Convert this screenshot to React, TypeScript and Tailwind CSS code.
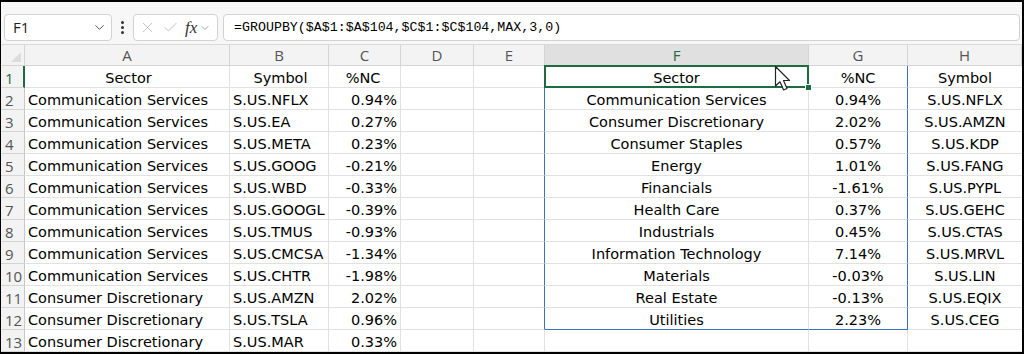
import { ChevronDown, X, Check } from 'lucide-react';

const cellFont = { fontFamily: '"DejaVu Sans", "Liberation Sans", sans-serif' };

const colWidths = 'grid-cols-[24px_205px_99px_72px_73px_71px_264px_99px_1fr]';
const letters = ['A', 'B', 'C', 'D', 'E', 'F', 'G', 'H'];

const source: [string, string, string][] = [
  ['Sector', 'Symbol', '%NC'],
  ['Communication Services', 'S.US.NFLX', '0.94%'],
  ['Communication Services', 'S.US.EA', '0.27%'],
  ['Communication Services', 'S.US.META', '0.23%'],
  ['Communication Services', 'S.US.GOOG', '-0.21%'],
  ['Communication Services', 'S.US.WBD', '-0.33%'],
  ['Communication Services', 'S.US.GOOGL', '-0.39%'],
  ['Communication Services', 'S.US.TMUS', '-0.93%'],
  ['Communication Services', 'S.US.CMCSA', '-1.34%'],
  ['Communication Services', 'S.US.CHTR', '-1.98%'],
  ['Consumer Discretionary', 'S.US.AMZN', '2.02%'],
  ['Consumer Discretionary', 'S.US.TSLA', '0.96%'],
  ['Consumer Discretionary', 'S.US.MAR', '0.33%'],
];

const grouped: [string, string, string][] = [
  ['Sector', '%NC', 'Symbol'],
  ['Communication Services', '0.94%', 'S.US.NFLX'],
  ['Consumer Discretionary', '2.02%', 'S.US.AMZN'],
  ['Consumer Staples', '0.57%', 'S.US.KDP'],
  ['Energy', '1.01%', 'S.US.FANG'],
  ['Financials', '-1.61%', 'S.US.PYPL'],
  ['Health Care', '0.37%', 'S.US.GEHC'],
  ['Industrials', '0.45%', 'S.US.CTAS'],
  ['Information Technology', '7.14%', 'S.US.MRVL'],
  ['Materials', '-0.03%', 'S.US.LIN'],
  ['Real Estate', '-0.13%', 'S.US.EQIX'],
  ['Utilities', '2.23%', 'S.US.CEG'],
  ['', '', ''],
];

function Pointer() {
  return (
    <svg width="20" height="28" viewBox="0 0 20 28" className="absolute left-[229px] top-[-1px] z-20">
      <path
        d="M1.5 1.5 L1.5 21 L6 16.8 L9.6 25 L13 23.5 L9.5 15.5 L15.5 15.5 Z"
        fill="white"
        stroke="#222"
        strokeWidth="1.2"
        strokeLinejoin="round"
      />
    </svg>
  );
}

function FormulaBar() {
  return (
    <div className="flex items-start h-[43px] bg-[#f7f7f7] border-b border-[#dadada] pt-[12px] pl-[3px] pr-[2px]">
      <div className="flex items-center justify-between w-[108px] h-[27px] bg-white border border-[#d2d2d2] rounded-[4px] pl-[8px] pr-[4px]">
        <span className="text-[15px] text-[#222]" style={{ fontFamily: '"Open Sans", sans-serif' }}>F1</span>
        <ChevronDown size={15} strokeWidth={1.5} className="text-[#444]" />
      </div>
      <div className="w-[21px] h-[27px] flex flex-col items-center justify-center gap-[2px]">
        <span className="w-[3px] h-[3px] bg-[#333] rounded-full" />
        <span className="w-[3px] h-[3px] bg-[#333] rounded-full" />
        <span className="w-[3px] h-[3px] bg-[#333] rounded-full" />
      </div>
      <div className="flex items-center w-[85px] h-[27px] bg-white border border-[#d2d2d2] rounded-[4px] pl-[5px] gap-[6px]">
        <X size={17} strokeWidth={1.1} className="text-[#b4b4b4]" />
        <Check size={17} strokeWidth={1.1} className="text-[#b4b4b4]" />
        <span className="flex items-center">
          <span className="italic text-[17px] text-[#333] leading-none" style={{ fontFamily: '"Liberation Serif", serif' }}>fx</span>
          <ChevronDown size={12} strokeWidth={1.3} className="text-[#777] ml-[2px]" />
        </span>
      </div>
      <div className="flex-1 ml-[5px] h-[27px] bg-white border border-[#d2d2d2] rounded-[4px] flex items-center pl-[10px]">
        <span className="text-[13.3px] text-black" style={{ fontFamily: '"Liberation Mono", monospace' }}>
          =GROUPBY($A$1:$A$104,$C$1:$C$104,MAX,3,0)
        </span>
      </div>
    </div>
  );
}

function App() {
  return (
    <div className="w-[1024px] h-[354px] overflow-hidden bg-white border-t-2 border-r-2 border-b-2 border-l border-black">
      <FormulaBar />
      <div className={`grid ${colWidths}`}>
        {/* header row */}
        <div className="h-[21px] bg-[#f3f3f3] border-r border-b border-[#d4d4d4] relative">
          <div className="absolute right-[3px] bottom-[3px] w-0 h-0 border-l-[10px] border-l-transparent border-b-[10px] border-b-[#dcdcdc]" />
        </div>
        {letters.map((l) => (
          <div
            key={l}
            className={`h-[21px] flex items-center justify-center border-r border-b border-[#d4d4d4] text-[15px] pt-[1px] ${
              l === 'F' ? 'bg-[#e0e0e0] text-[#1d6b40]' : 'bg-[#f3f3f3] text-[#555]'
            }`}
            style={{ fontFamily: '"Open Sans", sans-serif' }}
          >
            {l}
          </div>
        ))}

        {source.map((row, i) => {
          const r = i + 1;
          const g = grouped[i];
          const inSpill = r <= 12;
          const lastSpill = r === 12;
          const base =
            'h-[22px] border-b border-r flex items-center pt-[4px] text-[14.5px] text-black whitespace-nowrap overflow-hidden';
          return [
            <div
              key={`h${r}`}
              className={`h-[22px] flex items-center pl-[4px] pt-[3px] bg-[#f3f3f3] border-b border-[#d4d4d4] text-[15px] ${
                r === 1 ? 'border-r-2 border-r-[#1d6b40] text-[#1d6b40]' : 'border-r border-r-[#c8c8c8] text-[#555]'
              }`}
              style={{ fontFamily: '"Open Sans", sans-serif' }}
            >
              {r}
            </div>,
            <div key={`a${r}`} className={`${base} border-[#e1e1e1] pl-[3px] ${r === 1 ? 'justify-center' : ''}`} style={cellFont}>
              {row[0]}
            </div>,
            <div key={`b${r}`} className={`${base} border-[#e1e1e1] pl-[3px] ${r === 1 ? 'justify-center' : ''}`} style={cellFont}>
              {row[1]}
            </div>,
            <div key={`c${r}`} className={`${base} border-[#e1e1e1] pr-[3px] ${r === 1 ? 'justify-center' : 'justify-end'}`} style={cellFont}>
              {row[2]}
            </div>,
            <div key={`d${r}`} className={`${base} border-[#e1e1e1]`} />,
            <div
              key={`e${r}`}
              className={`${base} border-b-[#e1e1e1] ${inSpill ? 'border-r-[#3b6fc4]' : 'border-r-[#e1e1e1]'}`}
            />,
            <div
              key={`f${r}`}
              className={`${base} justify-center relative overflow-visible ${
                lastSpill ? 'border-b-[#3b6fc4]' : 'border-b-[#e1e1e1]'
              } border-r-[#e1e1e1]`}
              style={cellFont}
            >
              {g[0]}
              {r === 1 && (
                <>
                  <div className="absolute left-[-1px] top-[-1px] right-[-1px] bottom-[-1px] border-2 border-[#1d6b40] pointer-events-none z-10" />
                  <div className="absolute right-[-4px] bottom-[-4px] w-[7px] h-[7px] bg-[#1d6b40] border border-white z-10" />
                  <Pointer />
                </>
              )}
            </div>,
            <div
              key={`g${r}`}
              className={`${base} justify-center ${lastSpill ? 'border-b-[#3b6fc4]' : 'border-b-[#e1e1e1]'} ${
                inSpill ? 'border-r-[#3b6fc4]' : 'border-r-[#e1e1e1]'
              }`}
              style={cellFont}
            >
              {g[1]}
            </div>,
            <div key={`x${r}`} className={`${base} justify-center border-[#e1e1e1] border-r-0`} style={cellFont}>
              {g[2]}
            </div>,
          ];
        })}
      </div>
    </div>
  );
}

export default App;
